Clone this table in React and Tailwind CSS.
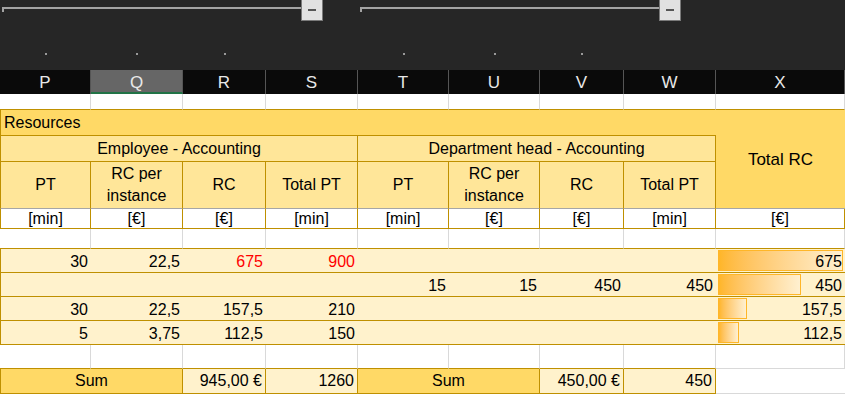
import React from "react";

const cols = ["P", "Q", "R", "S", "T", "U", "V", "W", "X"];

// data rows: [PT, RC/inst, RC, Total PT] x2, total RC
const rows = [
  { a: ["30", "22,5", "675", "900"], b: ["", "", "", ""], total: 675, totalTxt: "675", red: true },
  { a: ["", "", "", ""], b: ["15", "15", "450", "450"], total: 450, totalTxt: "450" },
  { a: ["30", "22,5", "157,5", "210"], b: ["", "", "", ""], total: 157.5, totalTxt: "157,5" },
  { a: ["5", "3,75", "112,5", "150"], b: ["", "", "", ""], total: 112.5, totalTxt: "112,5" },
];

const MAX = 675;
const BAR_W = 125;

const OutlineBar = () => (
  <div className="flex items-start">
    <div className="w-[299px] h-[5px] mt-[7px] border-t-2 border-l-2 border-[#a3a3a3]" />
    <div className="w-[22px] h-[22px] -mt-[1px] bg-[#e1e1e1] border border-[#7a7a7a] flex items-center justify-center">
      <div className="w-[8px] h-[2px] bg-[#555]" />
    </div>
  </div>
);

const App = () => {
  return (
    <div
      className="w-[845px] h-[394px] overflow-hidden bg-white"
      style={{ fontFamily: '"Liberation Sans", Arial, sans-serif' }}
    >
      {/* outline area */}
      <div className="h-[70px] bg-[#262626] flex flex-col">
        <div className="flex pl-[2px] gap-[37px] h-[22px]">
          <OutlineBar />
          <OutlineBar />
        </div>
        <div className="grid grid-cols-[91px_92px_83px_92px_91px_91px_84px_92px_129px] mt-[31px]">
          {cols.map((c) => (
            <div key={c} className="flex justify-center">
              {["P", "Q", "R", "T", "U", "V"].includes(c) && <div className="w-[2px] h-[2px] bg-[#9a9a9a]" />}
            </div>
          ))}
        </div>
      </div>

      {/* column letters */}
      <div className="grid grid-cols-[91px_92px_83px_92px_91px_91px_84px_92px_129px] grid-rows-[24px] h-[24px] bg-[#0a0a0a] leading-none">
        {cols.map((c) => (
          <div
            key={c}
            className={
              c === "Q"
                ? "bg-[#666666] border-b-2 border-[#217346] border-r border-r-[#555] flex items-center justify-center text-[17px] pt-[2px] text-[#e8e8e8]"
                : "border-r border-[#555] flex items-center justify-center text-[17px] text-[#e8e8e8]"
            }
          >
            {c}
          </div>
        ))}
      </div>

      {/* sheet */}
      <div className="grid grid-cols-[91px_92px_83px_92px_91px_91px_84px_92px_129px] grid-rows-[16px_26px_26px_47px_20px_20px_24px_24px_24px_24px_24px_25px] text-[16px] text-black leading-none">
        {/* blank row */}
        {cols.map((c) => (
          <div key={"b1" + c} className="border-r border-b border-r-[#d9d9d9] border-b-[#bf9000]" />
        ))}

        {/* Resources */}
        <div className="col-span-8 bg-[#ffd966] border-l border-b border-[#bf9000] flex items-center pl-[3px]">
          Resources
        </div>
        <div className="row-span-3 bg-[#ffd966] border-b border-[#a6a6a6] flex items-center justify-center text-[17px]">
          Total RC
        </div>

        {/* groups */}
        <div className="col-span-4 bg-[#ffe699] border-l border-r border-b border-[#bf9000] flex items-center justify-center">
          Employee - Accounting
        </div>
        <div className="col-span-4 bg-[#ffe699] border-r border-b border-[#bf9000] flex items-center justify-center">
          Department head - Accounting
        </div>

        {/* column titles */}
        {["PT", "RC per instance", "RC", "Total PT", "PT", "RC per instance", "RC", "Total PT"].map((t, i) => (
          <div
            key={"h" + i}
            className={
              (i === 0 ? "border-l border-l-[#bf9000] " : "") +
              "bg-[#ffe699] border-r border-b border-r-[#bf9000] border-b-[#a6a6a6] flex items-center justify-center text-center leading-[22px] px-[8px]"
            }
          >
            {t}
          </div>
        ))}

        {/* units */}
        {["[min]", "[€]", "[€]", "[min]", "[min]", "[€]", "[€]", "[min]", "[€]"].map((u, i) => (
          <div
            key={"u" + i}
            className={
              (i === 0 ? "border-l " : "") +
              "bg-white border-r border-b border-[#bf9000] flex items-center justify-center"
            }
          >
            {u}
          </div>
        ))}

        {/* blank row */}
        {cols.map((c) => (
          <div key={"b2" + c} className="border-r border-b border-r-[#d9d9d9] border-b-[#bf9000]" />
        ))}

        {/* data rows */}
        {rows.map((r, ri) => (
          <React.Fragment key={"r" + ri}>
            {[...r.a, ...r.b].map((v, i) => (
              <div
                key={i}
                className={
                  (i === 0 ? "border-l " : "") +
                  (r.red && (i === 2 || i === 3) ? "text-[#ff0000] " : "") +
                  "bg-[#fff2cc] border-b border-[#bf9000] flex items-center justify-end pr-[3px] pt-[2px]"
                }
              >
                {v}
              </div>
            ))}
            <div className="relative bg-[#fff2cc] border-b border-[#bf9000] flex items-center justify-end pr-[3px] pt-[2px]">
              <div
                className="absolute left-[2px] top-[1px] bottom-[1px] border border-[#ffb628] bg-gradient-to-r from-[#ffb628] to-[#fff0d0]"
                style={{ width: Math.round((r.total / MAX) * BAR_W) }}
              />
              <span className="relative">{r.totalTxt}</span>
            </div>
          </React.Fragment>
        ))}

        {/* blank row */}
        {cols.map((c, i) => (
          <div
            key={"b3" + c}
            className={
              "border-r border-b border-r-[#d9d9d9] " + (i < 8 ? "border-b-[#bf9000]" : "border-b-[#d9d9d9]")
            }
          />
        ))}

        {/* sums */}
        <div className="col-span-2 bg-[#ffd966] border-l border-r border-b border-[#bf9000] flex items-center justify-center">
          Sum
        </div>
        <div className="bg-[#fff2cc] border-r border-b border-[#bf9000] flex items-center justify-end pr-[3px]">
          945,00 €
        </div>
        <div className="bg-[#fff2cc] border-r border-b border-[#bf9000] flex items-center justify-end pr-[3px]">
          1260
        </div>
        <div className="col-span-2 bg-[#ffd966] border-r border-b border-[#bf9000] flex items-center justify-center">
          Sum
        </div>
        <div className="bg-[#fff2cc] border-r border-b border-[#bf9000] flex items-center justify-end pr-[3px]">
          450,00 €
        </div>
        <div className="bg-[#fff2cc] border-r border-b border-[#bf9000] flex items-center justify-end pr-[3px]">
          450
        </div>
        <div className="bg-white border-b border-[#d9d9d9]" />
      </div>
    </div>
  );
};

export default App;
